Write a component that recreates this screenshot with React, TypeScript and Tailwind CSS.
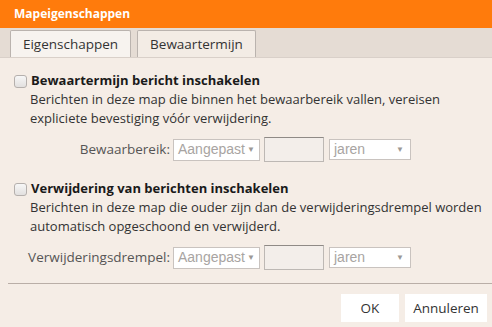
import React from "react";

function Select({ value, className }: { value: string; className: string }) {
  return (
    <div
      className={`flex items-center justify-between border border-[#c9c3bf] bg-white pl-[4px] pr-[4px] text-[#a8a4a2] text-[14px] ${className}`}
      style={{ fontFamily: '"Liberation Sans", Arial, sans-serif' }}
    >
      <span>{value}</span>
      <span className="text-[8px] text-[#9c9896]">▼</span>
    </div>
  );
}

function Section({
  title,
  lines,
  label,
}: {
  title: string;
  lines: string[];
  label: string;
}) {
  return (
    <div className="flex flex-col">
      <label className="flex items-center gap-[4px] pl-[14px] h-[20px]">
        <span className="w-[13px] h-[13px] rounded-[3px] border border-[#b5b0ad] bg-gradient-to-b from-[#f7f7f7] to-[#e2e0df]" />
        <span className="font-bold text-[#1a1a1a]">{title}</span>
      </label>
      <div className="pl-[30px] text-[#333] leading-[19px] mt-[-1px] whitespace-nowrap">
        {lines.map((l) => (
          <div key={l}>{l}</div>
        ))}
      </div>
      <div className="flex items-center mt-[9px] text-[#555] text-[13.5px]">
        <span className="text-right pr-[3px] w-[173px]">{label}</span>
        <Select value="Aangepast" className="w-[87px] h-[22px]" />
        <div className="ml-[4px] w-[60px] h-[25px] border border-[#bdb8b4] border-t-[#8f8a86] bg-[#f3eeea]" />
        <Select value="jaren" className="ml-[5px] w-[82px] h-[21px] pr-[6px]" />
      </div>
    </div>
  );
}

export default function App() {
  return (
    <div
      className="w-[492px] h-[327px] flex flex-col bg-[#f5ede6] text-[13px] overflow-hidden"
      style={{ fontFamily: '"Open Sans", "Noto Sans", sans-serif' }}
    >
      <div className="shrink-0 h-[28px] bg-[#ff7b0c] flex items-center pl-[14px] text-white font-bold text-[12px]">
        Mapeigenschappen
      </div>
      <div className="shrink-0 h-[30px] bg-[#e5dcd4] flex items-end pl-[10px] gap-[6px] border-b border-[#d9d0c9]">
        <div className="h-[27px] w-[121px] flex items-center justify-center border border-b-0 border-[#bab3ae] bg-[#f7f3ef] text-[#333] text-[13.5px] rounded-t-[2px]">
          Eigenschappen
        </div>
        <div className="h-[27px] w-[119px] flex items-center justify-center border border-b-0 border-[#bab3ae] bg-[#f3ece5] text-[#333] text-[13.5px] rounded-t-[2px]">
          Bewaartermijn
        </div>
      </div>
      <div className="shrink-0 flex flex-col gap-[17px] pt-[13px]">
        <Section
          title="Bewaartermijn bericht inschakelen"
          lines={[
            "Berichten in deze map die binnen het bewaarbereik vallen, vereisen",
            "expliciete bevestiging vóór verwijdering.",
          ]}
          label="Bewaarbereik:"
        />
        <Section
          title="Verwijdering van berichten inschakelen"
          lines={[
            "Berichten in deze map die ouder zijn dan de verwijderingsdrempel worden",
            "automatisch opgeschoond en verwijderd.",
          ]}
          label="Verwijderingsdrempel:"
        />
      </div>
      <div className="shrink-0 mt-[13px] ml-[8px] border-t border-[#b9aea7]" />
      <div className="shrink-0 flex justify-end gap-[6px] pr-[5px] pt-[10px]">
        <button className="w-[58px] h-[28px] bg-white text-[#333] text-[13.5px]">OK</button>
        <button className="w-[82px] h-[28px] bg-white text-[#333] text-[13.5px]">Annuleren</button>
      </div>
    </div>
  );
}
